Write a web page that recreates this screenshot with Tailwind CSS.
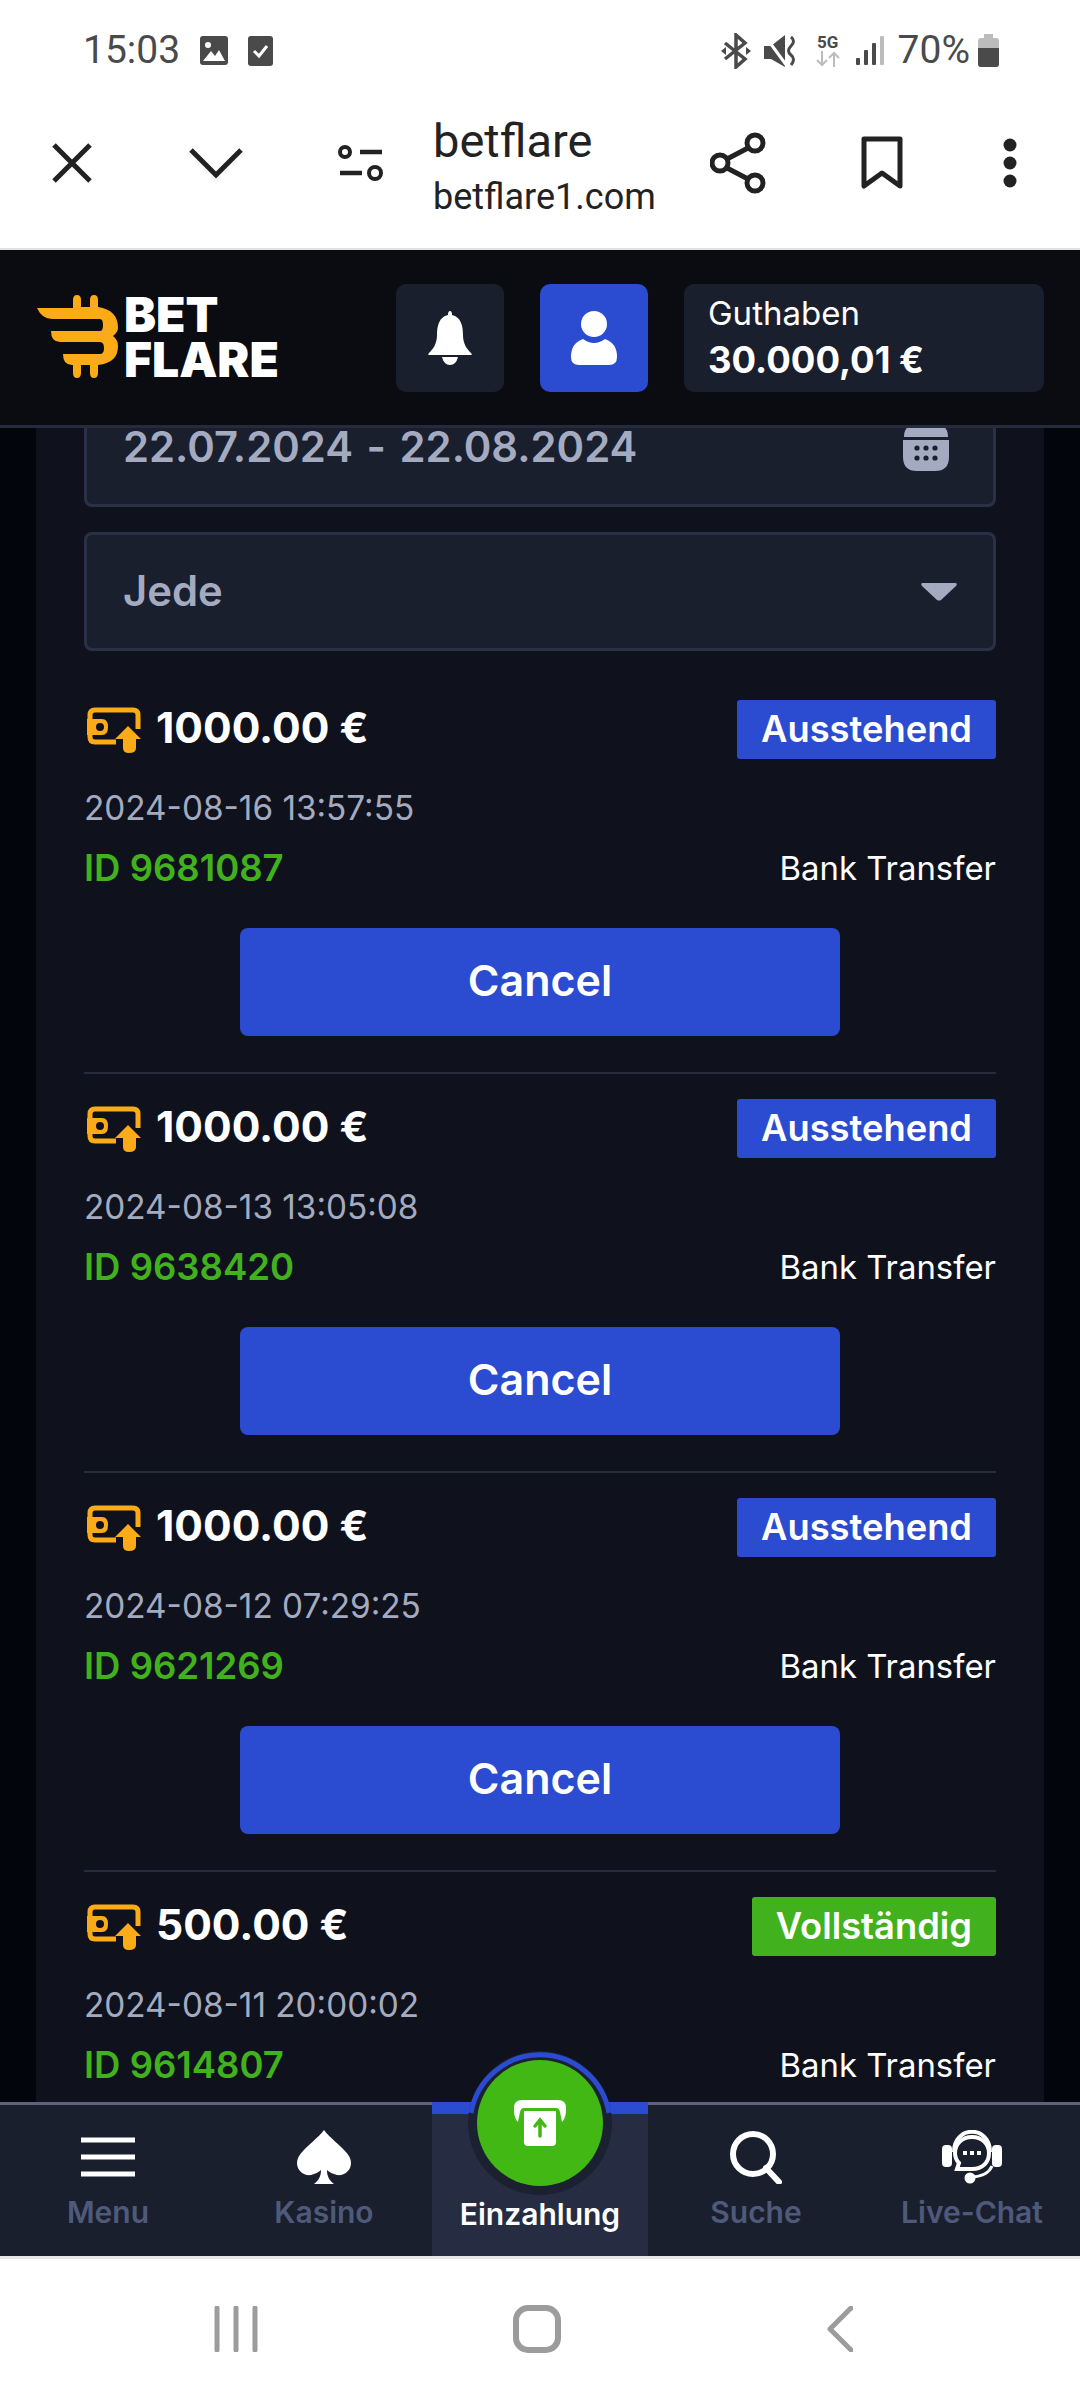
<!DOCTYPE html>
<html lang="en">
<head>
<meta charset="UTF-8">
<meta name="viewport" content="width=device-width, initial-scale=1.0">
<title>betflare</title>
<script src="https://cdn.jsdelivr.net/npm/@tailwindcss/browser@4"></script>
</head>
<body class="bg-white w-[1080px] h-[2400px] overflow-hidden font-['Inter',sans-serif]">
<div class="flex flex-col h-[2400px] w-[1080px]">

  <!-- status bar -->
  <div class="h-[100px] flex items-center pl-[83px] pr-[79px] pt-[1px] text-[#4a4a4a] font-['Roboto',sans-serif] shrink-0">
    <span class="text-[39px] leading-none">15:03</span>
    <svg class="ml-[20px]" width="28" height="30" viewBox="0 0 28 30"><rect x="0" y="0" width="28" height="29" rx="3" fill="#4a4a4a"/><circle cx="8" cy="9" r="3" fill="#fff"/><path d="M3 25 L11 15 L15 20 L19 14 L25 25 Z" fill="#fff"/></svg>
    <svg class="ml-[20px]" width="25" height="30" viewBox="0 0 25 30"><rect width="25" height="30" rx="3" fill="#4a4a4a"/><path d="M6 15 L11 20 L19 10" fill="none" stroke="#fff" stroke-width="3"/></svg>
    <div class="flex-1"></div>
    <svg width="30" height="36" viewBox="0 0 30 36"><path d="M4 10 L24 26 L15 34 V2 L24 10 L4 26" fill="none" stroke="#4a4a4a" stroke-width="3.5"/><path d="M0 18 L5 14 V22 Z M30 18 L25 14 V22 Z" fill="#4a4a4a"/></svg>
    <svg class="ml-[12px]" width="34" height="36" viewBox="0 0 34 36"><path d="M1 13 H8 L22 2 V34 L8 26 H1 Z" fill="#4a4a4a"/><path d="M2 3 L24 33" stroke="#fff" stroke-width="3"/><path d="M28 4 q5 4 0 9 q-5 5 0 9 q5 4 0 10" fill="none" stroke="#4a4a4a" stroke-width="3"/></svg>
    <div class="ml-[18px] w-[26px] flex flex-col items-center">
      <span class="text-[17px] leading-[17px] font-bold">5G</span>
      <svg width="26" height="16" viewBox="0 0 26 16"><path d="M7 0 V14 M2 9 L7 14 L12 9 M19 16 V2 M14 7 L19 2 L24 7" fill="none" stroke="#bcbcbc" stroke-width="2"/></svg>
    </div>
    <svg class="ml-[15px]" width="28" height="30" viewBox="0 0 28 30"><rect x="0" y="22" width="4" height="7" rx="1" fill="#4a4a4a"/><rect x="8" y="14" width="4" height="15" rx="1" fill="#4a4a4a"/><rect x="16" y="7" width="4" height="22" rx="1" fill="#4a4a4a"/><rect x="24" y="0" width="4" height="29" rx="1" fill="#bcbcbc"/></svg>
    <span class="ml-[14px] text-[39px] leading-none">70%</span>
    <svg class="ml-[8px] mr-[2px]" width="21" height="33" viewBox="0 0 21 33"><rect x="6" y="0" width="9" height="5" fill="#bcbcbc"/><rect x="0" y="4" width="21" height="29" rx="3" fill="#bcbcbc"/><path d="M0 14 H21 V30 a3 3 0 0 1 -3 3 H3 a3 3 0 0 1 -3 -3 Z" fill="#4a4a4a"/></svg>
  </div>

  <!-- browser toolbar -->
  <div class="h-[148px] flex items-center pb-[22px] shrink-0 text-[#222]">
    <svg class="ml-[52px]" width="40" height="40" viewBox="0 0 40 40"><path d="M2 2 L38 38 M38 2 L2 38" stroke="#222" stroke-width="5" fill="none"/></svg>
    <svg class="ml-[97px]" width="54" height="32" viewBox="0 0 54 32"><path d="M2 3 L27 28 L52 3" stroke="#222" stroke-width="5" fill="none"/></svg>
    <svg class="ml-[95px]" width="46" height="38" viewBox="0 0 46 38"><circle cx="7" cy="8" r="5" fill="none" stroke="#222" stroke-width="4"/><path d="M22 8 H44 M2 29 H24" stroke="#222" stroke-width="4.5"/><circle cx="37" cy="29" r="6" fill="none" stroke="#222" stroke-width="4"/></svg>
    <div class="ml-[49px] w-[267px] mt-[6px] font-['Roboto',sans-serif] flex flex-col">
      <span class="text-[47px] leading-[56px]">betflare</span>
      <span class="text-[36px] leading-[44px] mt-[6px]">betflare1.com</span>
    </div>
    <svg class="ml-[10px]" width="56" height="62" viewBox="0 0 56 62"><circle cx="45" cy="11" r="8" fill="none" stroke="#222" stroke-width="5"/><circle cx="10" cy="31" r="8" fill="none" stroke="#222" stroke-width="5"/><circle cx="45" cy="51" r="8" fill="none" stroke="#222" stroke-width="5"/><path d="M38 16 L17 27 M17 36 L38 47" stroke="#222" stroke-width="5"/></svg>
    <svg class="ml-[95px]" width="42" height="54" viewBox="0 0 42 54"><path d="M3 3 H39 V50 L21 37 L3 50 Z" fill="none" stroke="#222" stroke-width="5" stroke-linejoin="round"/></svg>
    <svg class="ml-[100px]" width="14" height="50" viewBox="0 0 14 50"><circle cx="7" cy="7" r="6.5" fill="#222"/><circle cx="7" cy="25" r="6.5" fill="#222"/><circle cx="7" cy="43" r="6.5" fill="#222"/></svg>
  </div>

  <div class="h-[2px] bg-[#dfe3e0] shrink-0"></div>

  <!-- site header -->
  <div class="h-[178px] shrink-0 bg-[#0a0c12] border-b-[3px] border-[#252b3d] flex items-center pr-[36px] relative z-10">
    <svg class="ml-[37px] mt-[-2px]" width="81" height="83" viewBox="37 35 81 83"><path fill="#fbab18" d="M37 48 H73 V40 Q73 35 77 35 Q81 35 81 40 V47 H90 V40 Q90 35 94 35 Q98 35 98 40 V47 Q118 50 118 68 Q118 72 113 76 Q118 80 118 86 Q118 103 98 105 V113 Q98 118 94 118 Q90 118 90 113 V105 H81 V113 Q81 118 77 118 Q73 118 73 113 V105 H72 Q63 105 63 94 H100 Q104 94 104 88 Q104 82 100 82 H60 Q51 82 51 71 H100 Q103 71 103 65 Q103 59 100 59 H52 Q42 59 37 48 Z"/></svg>
    <div class="ml-[6px] font-black text-white text-[48px] leading-[45px] flex flex-col mt-[-2px]">
      <span>BET</span>
      <span>FLARE</span>
    </div>
    <div class="flex-1"></div>
    <div class="w-[108px] h-[108px] rounded-[10px] bg-[#1a1f2e] flex items-center justify-center mr-[36px]">
      <svg width="46" height="54" viewBox="0 0 46 54"><path d="M23 0 Q25 0 25 4 C34 6 36 15 36 24 C36 33 40 38 44 42 Q46 44 43 44 H3 Q0 44 2 42 C6 38 10 33 10 24 C10 15 12 6 21 4 Q21 0 23 0 Z M15 46 H31 Q29 54 23 54 Q17 54 15 46 Z" fill="#fff"/></svg>
    </div>
    <div class="w-[108px] h-[108px] rounded-[10px] bg-[#2b4bd0] flex items-center justify-center mr-[36px]">
      <svg width="46" height="54" viewBox="0 0 46 54"><ellipse cx="23" cy="13" rx="13" ry="13" fill="#fff"/><path d="M12 28 Q23 36 34 28 Q46 32 46 46 Q46 54 38 54 H8 Q0 54 0 46 Q0 32 12 28 Z" fill="#fff"/></svg>
    </div>
    <div class="w-[360px] h-[108px] rounded-[10px] bg-[#1a1f2e] flex flex-col justify-center pl-[24px] text-white">
      <span class="text-[33px] leading-[44px]">Guthaben</span>
      <span class="text-[36.5px] leading-[50px] font-bold">30.000,01 €</span>
    </div>
  </div>

  <!-- scrolled content -->
  <div class="flex-1 bg-[#03050c] px-[36px] overflow-hidden min-h-0">
    <div class="bg-[#0f121c] px-[48px] mt-[-40px] pb-[100px]">
      <div class="h-[119px] bg-[#1a1f2e] border-[3px] border-[#2a3146] rounded-[8px] flex items-center justify-between pl-[36px] pr-[44px] text-[#a4abc0] text-[41.8px] font-semibold">
        <span>22.07.2024 <span class="mx-[3px]">-</span> 22.08.2024</span>
        <svg width="46" height="46" viewBox="0 0 46 46"><path d="M12 0 H34 Q45 0 45 12 H1 Q1 0 12 0 Z M0 15 H46 V32 Q46 46 32 46 H14 Q0 46 0 32 Z" fill="#a4abc0"/><g fill="#1a1f2e"><circle cx="14" cy="23" r="2.6"/><circle cx="23" cy="23" r="2.6"/><circle cx="32" cy="23" r="2.6"/><circle cx="14" cy="33" r="2.6"/><circle cx="23" cy="33" r="2.6"/><circle cx="32" cy="33" r="2.6"/></g></svg>
      </div>
      <div class="h-[119px] mt-[25px] bg-[#1a1f2e] border-[3px] border-[#2a3146] rounded-[8px] flex items-center justify-between pl-[36px] pr-[35px] text-[#a4abc0] text-[41.8px] font-semibold">
        <span>Jede</span>
        <svg width="38" height="18" viewBox="0 0 38 18"><path d="M3 0 H35 Q38 0 36 3 L21 17 Q19 18 17 17 L2 3 Q0 0 3 0 Z" fill="#a4abc0"/></svg>
      </div>

      <div class="pt-[49px] pb-[36px] border-b-2 border-[#262c3d]">
        <div class="flex items-center justify-between h-[59px]">
          <div class="flex items-center">
            <svg class="w-[54px] h-[46px] ml-[3px]" viewBox="0 0 54 46"><path d="M51 22 V8 Q51 3 46 3 H8 Q3 3 3 8 V30 Q3 35 8 35 H29" fill="none" stroke="#fbab18" stroke-width="5"/><path d="M0 12 H15 Q21 12 21 20 Q21 28 15 28 H0 Z" fill="#fbab18"/><circle cx="13" cy="20" r="4" fill="#0f121c"/><path d="M41 19 L54 32 H49 V41 Q49 46 42 46 Q36 46 36 41 V32 H28 Z" fill="#fbab18"/></svg>
            <span class="ml-[15px] mt-[-2px] text-[42.5px] font-bold text-white leading-none">1000.00 €</span>
          </div>
          <span class="h-[59px] px-[24px] bg-[#2b4bd0] rounded-[3px] text-white text-[36.3px] font-semibold flex items-center">Ausstehend</span>
        </div>
        <div class="mt-[29px] text-[33.3px] leading-[40px] text-[#a4abc0]">2024-08-16 13:57:55</div>
        <div class="mt-[20px] flex items-center justify-between leading-[40px]">
          <span class="text-[36.5px] font-semibold text-[#41b21d]">ID 9681087</span>
          <span class="text-[32.9px] text-white">Bank Transfer</span>
        </div>
        <button class="block mx-auto mt-[40px] w-[600px] h-[108px] pb-[3px] bg-[#2b4bd0] rounded-[8px] text-white text-[43px] font-semibold">Cancel</button>
      </div>

      <div class="pt-[25px] pb-[36px] border-b-2 border-[#262c3d]">
        <div class="flex items-center justify-between h-[59px]">
          <div class="flex items-center">
            <svg class="w-[54px] h-[46px] ml-[3px]" viewBox="0 0 54 46"><path d="M51 22 V8 Q51 3 46 3 H8 Q3 3 3 8 V30 Q3 35 8 35 H29" fill="none" stroke="#fbab18" stroke-width="5"/><path d="M0 12 H15 Q21 12 21 20 Q21 28 15 28 H0 Z" fill="#fbab18"/><circle cx="13" cy="20" r="4" fill="#0f121c"/><path d="M41 19 L54 32 H49 V41 Q49 46 42 46 Q36 46 36 41 V32 H28 Z" fill="#fbab18"/></svg>
            <span class="ml-[15px] mt-[-2px] text-[42.5px] font-bold text-white leading-none">1000.00 €</span>
          </div>
          <span class="h-[59px] px-[24px] bg-[#2b4bd0] rounded-[3px] text-white text-[36.3px] font-semibold flex items-center">Ausstehend</span>
        </div>
        <div class="mt-[29px] text-[33.3px] leading-[40px] text-[#a4abc0]">2024-08-13 13:05:08</div>
        <div class="mt-[20px] flex items-center justify-between leading-[40px]">
          <span class="text-[36.5px] font-semibold text-[#41b21d]">ID 9638420</span>
          <span class="text-[32.9px] text-white">Bank Transfer</span>
        </div>
        <button class="block mx-auto mt-[40px] w-[600px] h-[108px] pb-[3px] bg-[#2b4bd0] rounded-[8px] text-white text-[43px] font-semibold">Cancel</button>
      </div>

      <div class="pt-[25px] pb-[36px] border-b-2 border-[#262c3d]">
        <div class="flex items-center justify-between h-[59px]">
          <div class="flex items-center">
            <svg class="w-[54px] h-[46px] ml-[3px]" viewBox="0 0 54 46"><path d="M51 22 V8 Q51 3 46 3 H8 Q3 3 3 8 V30 Q3 35 8 35 H29" fill="none" stroke="#fbab18" stroke-width="5"/><path d="M0 12 H15 Q21 12 21 20 Q21 28 15 28 H0 Z" fill="#fbab18"/><circle cx="13" cy="20" r="4" fill="#0f121c"/><path d="M41 19 L54 32 H49 V41 Q49 46 42 46 Q36 46 36 41 V32 H28 Z" fill="#fbab18"/></svg>
            <span class="ml-[15px] mt-[-2px] text-[42.5px] font-bold text-white leading-none">1000.00 €</span>
          </div>
          <span class="h-[59px] px-[24px] bg-[#2b4bd0] rounded-[3px] text-white text-[36.3px] font-semibold flex items-center">Ausstehend</span>
        </div>
        <div class="mt-[29px] text-[33.3px] leading-[40px] text-[#a4abc0]">2024-08-12 07:29:25</div>
        <div class="mt-[20px] flex items-center justify-between leading-[40px]">
          <span class="text-[36.5px] font-semibold text-[#41b21d]">ID 9621269</span>
          <span class="text-[32.9px] text-white">Bank Transfer</span>
        </div>
        <button class="block mx-auto mt-[40px] w-[600px] h-[108px] pb-[3px] bg-[#2b4bd0] rounded-[8px] text-white text-[43px] font-semibold">Cancel</button>
      </div>

      <div class="pt-[25px]">
        <div class="flex items-center justify-between h-[59px]">
          <div class="flex items-center">
            <svg class="w-[54px] h-[46px] ml-[3px]" viewBox="0 0 54 46"><path d="M51 22 V8 Q51 3 46 3 H8 Q3 3 3 8 V30 Q3 35 8 35 H29" fill="none" stroke="#fbab18" stroke-width="5"/><path d="M0 12 H15 Q21 12 21 20 Q21 28 15 28 H0 Z" fill="#fbab18"/><circle cx="13" cy="20" r="4" fill="#0f121c"/><path d="M41 19 L54 32 H49 V41 Q49 46 42 46 Q36 46 36 41 V32 H28 Z" fill="#fbab18"/></svg>
            <span class="ml-[15px] mt-[-2px] text-[42.5px] font-bold text-white leading-none">500.00 €</span>
          </div>
          <span class="h-[59px] px-[24px] bg-[#41b21d] rounded-[3px] text-white text-[36.3px] font-semibold flex items-center">Vollständig</span>
        </div>
        <div class="mt-[29px] text-[33.3px] leading-[40px] text-[#a4abc0]">2024-08-11 20:00:02</div>
        <div class="mt-[20px] flex items-center justify-between leading-[40px]">
          <span class="text-[36.5px] font-semibold text-[#41b21d]">ID 9614807</span>
          <span class="text-[32.9px] text-white">Bank Transfer</span>
        </div>
      </div>
    </div>
  </div>

  <!-- bottom nav of the site -->
  <div class="h-[154px] shrink-0 bg-[#1a1f2e] border-t-[3px] border-[#5b6479] grid grid-cols-5 relative text-[30px] font-semibold text-[#4f5a7a]">
    <div class="flex flex-col items-center">
      <div class="h-[88px] pt-[16px] flex items-center">
        <svg width="54" height="40" viewBox="0 0 54 40"><path d="M0 3 H54 M0 20 H54 M0 37 H54" stroke="#fff" stroke-width="5"/></svg>
      </div>
      <span class="leading-[38px]">Menu</span>
    </div>
    <div class="flex flex-col items-center">
      <div class="h-[88px] pt-[16px] flex items-center">
        <svg width="54" height="54" viewBox="0 0 54 54"><path d="M27 0 C33 8 42 14 48 21 C52 25 54 29 54 33 C54 41 47 46 40 45 C36 44 32 42 30 40 C30 46 32 50 37 54 H17 C22 50 24 46 24 40 C22 42 18 44 14 45 C7 46 0 41 0 33 C0 29 2 25 6 21 C12 14 21 8 27 0 Z" fill="#fff"/></svg>
      </div>
      <span class="leading-[38px]">Kasino</span>
    </div>
    <div class="flex flex-col items-center justify-end bg-[#262d42] border-t-[12px] border-[#2b4bd0] mt-[-3px] text-white pb-[23px]">
      <span class="leading-[38px]">Einzahlung</span>
    </div>
    <div class="flex flex-col items-center">
      <div class="h-[88px] pt-[16px] flex items-center">
        <svg width="54" height="54" viewBox="0 0 54 54"><circle cx="24" cy="24" r="20" fill="none" stroke="#fff" stroke-width="6"/><path d="M37 38 L50 52" stroke="#fff" stroke-width="6" stroke-linecap="round"/></svg>
      </div>
      <span class="leading-[38px]">Suche</span>
    </div>
    <div class="flex flex-col items-center">
      <div class="h-[88px] pt-[16px] flex items-center">
        <svg width="60" height="54" viewBox="0 0 60 54"><path d="M12 22 C12 -5 48 -5 48 22" fill="none" stroke="#fff" stroke-width="4"/><rect x="0" y="15" width="10" height="22" rx="4" fill="#fff"/><rect x="50" y="15" width="10" height="22" rx="4" fill="#fff"/><path d="M30 7 C20 7 13 14 13 23 C13 28 15 31 17 33 L15 39 L30 39 C41 39 47 32 47 23 C47 14 40 7 30 7 Z" fill="none" stroke="#fff" stroke-width="4"/><rect x="21" y="21" width="4" height="4" fill="#fff"/><rect x="28" y="21" width="4" height="4" fill="#fff"/><rect x="35" y="21" width="4" height="4" fill="#fff"/><path d="M50 36 Q46 46 30 47" fill="none" stroke="#fff" stroke-width="3"/><circle cx="28" cy="48" r="5.5" fill="#fff"/></svg>
      </div>
      <span class="leading-[38px]">Live-Chat</span>
    </div>

    <!-- deposit button sits over the bar -->
    <div class="absolute left-[468px] top-[-54px] w-[144px] h-[144px]">
      <svg class="absolute inset-0" width="144" height="144" viewBox="0 0 144 144"><circle cx="72" cy="72" r="72" fill="#1c2132"/><path d="M3 62 A70 70 0 0 1 141 62" fill="none" stroke="#2b4bd0" stroke-width="5"/></svg>
      <div class="absolute left-[9px] top-[9px] w-[126px] h-[126px] rounded-full bg-[#41b813] flex items-center justify-center">
        <svg width="52" height="46" viewBox="0 0 52 46"><path d="M4 22 C0 18 0 12 0 8 Q0 0 8 0 H44 Q52 0 52 8 C52 12 52 18 48 22 L46 12 Q45 8 42 8 H10 Q7 8 6 12 Z" fill="#fff"/><path d="M10 11 H42 V42 Q42 46 38 46 H14 Q10 46 10 42 Z" fill="#fff"/><path d="M26 36 V21 M21 26 L26 20 L31 26" fill="none" stroke="#41b813" stroke-width="3.5" stroke-linecap="round"/></svg>
      </div>
    </div>
  </div>

  <div class="h-[3px] bg-[#e4e5e7] shrink-0"></div>

  <!-- android nav -->
  <div class="h-[141px] shrink-0 bg-white flex items-center">
    <svg class="ml-[214px] mt-[-2px]" width="44" height="46" viewBox="0 0 44 46"><path d="M3 2 V44 M22 2 V44 M41 2 V44" stroke="#9c9c9c" stroke-width="5" stroke-linecap="round"/></svg>
    <svg class="ml-[255px] mt-[-2px]" width="48" height="48" viewBox="0 0 48 48"><rect x="3" y="3" width="42" height="42" rx="12" fill="none" stroke="#9c9c9c" stroke-width="6"/></svg>
    <svg class="ml-[266px] mt-[-2px]" width="26" height="46" viewBox="0 0 26 46"><path d="M24 2 L3 23 L24 44" fill="none" stroke="#9c9c9c" stroke-width="5" stroke-linecap="round" stroke-linejoin="round"/></svg>
  </div>
</div>
</body>
</html>
